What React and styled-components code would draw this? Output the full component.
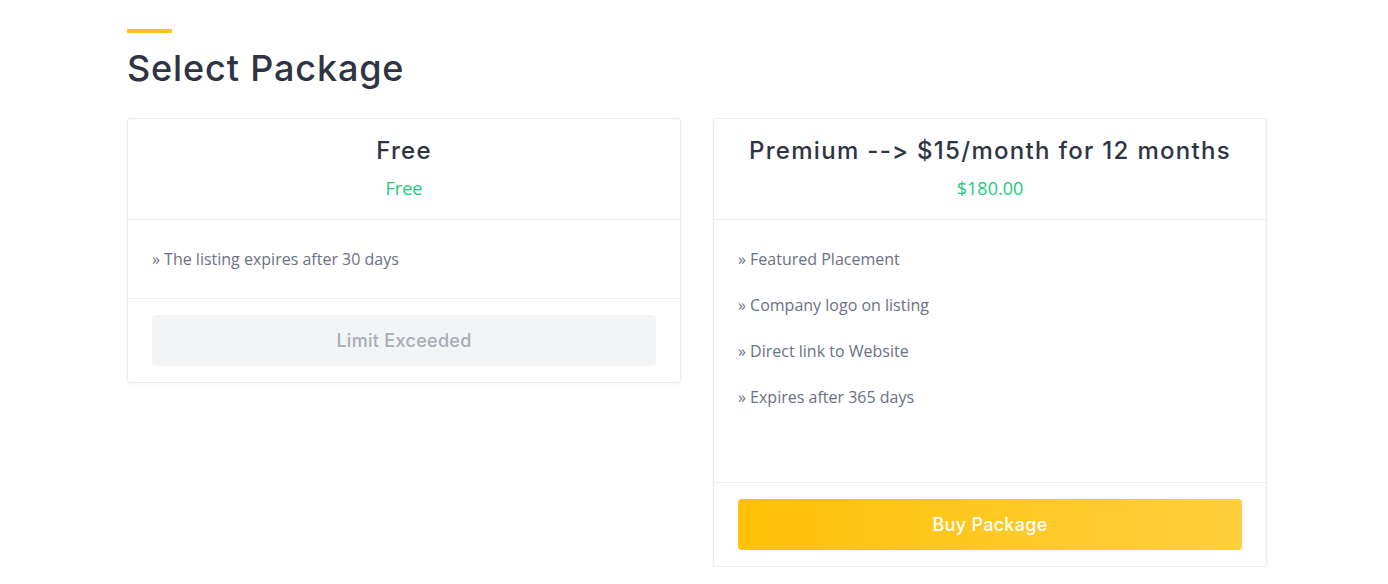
import React from 'react'
import styled, { createGlobalStyle } from 'styled-components'

const GlobalStyle = createGlobalStyle`
  body {
    margin: 0;
    background: #fff;
    font-family: "Open Sans", "Liberation Sans", sans-serif;
  }
`

const packages = [
  {
    name: 'Free',
    price: 'Free',
    features: ['The listing expires after 30 days'],
    action: 'Limit Exceeded',
    disabled: true,
  },
  {
    name: 'Premium --> $15/month for 12 months',
    price: '$180.00',
    features: [
      'Featured Placement',
      'Company logo on listing',
      'Direct link to Website',
      'Expires after 365 days',
    ],
    action: 'Buy Package',
    disabled: false,
    bodyHeight: 263,
  },
]

const App = () => {
  return (
    <Wrapper>
      <GlobalStyle />
      <Accent />
      <Title>Select Package</Title>
      <Grid>
        {packages.map((p) => (
          <Card key={p.name}>
            <CardHead>
              <PackName>{p.name}</PackName>
              <Price>{p.price}</Price>
            </CardHead>
            <CardBody $minHeight={p.bodyHeight}>
              {p.features.map((f) => (
                <Feature key={f}>» {f}</Feature>
              ))}
            </CardBody>
            <CardFoot>
              <ActionButton $disabled={p.disabled}>{p.action}</ActionButton>
            </CardFoot>
          </Card>
        ))}
      </Grid>
    </Wrapper>
  )
}

const Wrapper = styled.section`
  width: 1140px;
  margin: 0 0 0 127px;
  padding-top: 29px;
`

const Accent = styled.div`
  width: 45px;
  height: 4px;
  background: #fdc315;
`

const Title = styled.h1`
  margin: 13px 0 0;
  font-family: "Inter", "Open Sans", sans-serif;
  font-weight: 500;
  font-size: 36px;
  line-height: 44px;
  color: #2e3444;
  letter-spacing: 0.85px;
`

const Grid = styled.div`
  display: grid;
  grid-template-columns: 554px 554px;
  column-gap: 32px;
  align-items: start;
  margin-top: 28px;
`

const Card = styled.div`
  background: #fff;
  border: 1px solid #e9ecf1;
  border-radius: 3px;
  box-shadow: 0 1px 3px rgba(30, 40, 70, 0.06);
`

const CardHead = styled.div`
  padding: 14px 20px 17px;
  text-align: center;
  border-bottom: 1px solid #e9ecf1;
`

const PackName = styled.h3`
  margin: 0;
  font-family: "Inter", "Open Sans", sans-serif;
  font-weight: 500;
  font-size: 24px;
  line-height: 36px;
  color: #2e3444;
  letter-spacing: 1.3px;
  font-variant-ligatures: none;
  font-feature-settings: "calt" 0, "liga" 0;
`

const Price = styled.div`
  margin-top: 6px;
  font-size: 18px;
  line-height: 27px;
  color: #22c97c;
`

const CardBody = styled.div`
  display: flex;
  flex-direction: column;
  gap: 16px;
  padding: 24px 24px;
  min-height: ${(p) => (p.$minHeight ? `${p.$minHeight}px` : 'auto')};
  box-sizing: border-box;
  border-bottom: 1px solid #e9ecf1;
`

const Feature = styled.p`
  margin: 0;
  font-size: 16px;
  line-height: 30px;
  color: #6b7185;
`

const CardFoot = styled.div`
  padding: 16px 24px;
`

const ActionButton = styled.button`
  display: block;
  width: 100%;
  height: 51px;
  border: none;
  border-radius: 4px;
  font-family: "Inter", "Open Sans", sans-serif;
  font-weight: 500;
  font-size: 18px;
  letter-spacing: 0.3px;
  color: ${(p) => (p.$disabled ? '#a9adb6' : '#fff')};
  background: ${(p) =>
    p.$disabled ? '#f3f4f6' : 'linear-gradient(90deg, #ffc107 0%, #ffcf3c 100%)'};
  cursor: ${(p) => (p.$disabled ? 'default' : 'pointer')};
`

export default App
